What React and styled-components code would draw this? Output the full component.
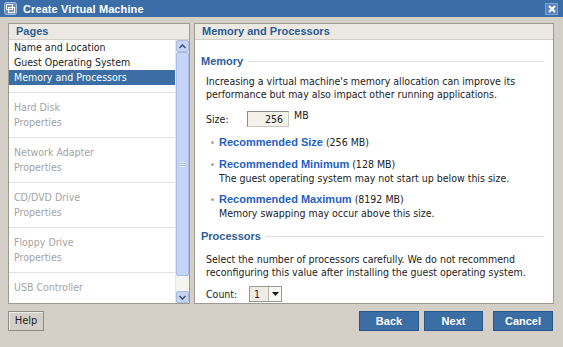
import React from 'react'
import styled, { createGlobalStyle } from 'styled-components'

const regularFont = `"DejaVu Sans Condensed", "Liberation Sans", Arial, sans-serif`
const boldFont = `"Liberation Sans", Arial, sans-serif`

const GlobalStyle = createGlobalStyle`
  html, body {
    margin: 0;
    padding: 0;
  }
  body {
    background: #d4d0c8;
    font-family: ${regularFont};
    font-size: 10.5px;
    color: #222;
  }
`

const pages = [
  { lines: ['Name and Location', 'Guest Operating System', 'Memory and Processors'], enabled: true },
  { lines: ['Hard Disk', 'Properties'] },
  { lines: ['Network Adapter', 'Properties'] },
  { lines: ['CD/DVD Drive', 'Properties'] },
  { lines: ['Floppy Drive', 'Properties'] },
  { lines: ['USB Controller'] },
]

const recommendations = [
  { label: 'Recommended Size', value: '(256 MB)' },
  { label: 'Recommended Minimum', value: '(128 MB)', note: 'The guest operating system may not start up below this size.' },
  { label: 'Recommended Maximum', value: '(8192 MB)', note: 'Memory swapping may occur above this size.' },
]

const VmIcon = () => (
  <svg width="13" height="13" viewBox="0 0 13 13">
    <rect x="0.5" y="0.5" width="12" height="12" rx="2" fill="#6d93c3" stroke="#a9c1e0" />
    <rect x="2.5" y="2.5" width="6" height="5" fill="none" stroke="#fff" />
    <rect x="4.5" y="5.5" width="6" height="5" fill="none" stroke="#fff" />
  </svg>
)

const CloseIcon = () => (
  <svg width="8" height="8" viewBox="0 0 8 8">
    <path d="M1 1 L7 7 M7 1 L1 7" stroke="#fff" strokeWidth="2" />
  </svg>
)

const Chevron = ({ up }) => (
  <svg width="7" height="5" viewBox="0 0 7 5">
    <path d={up ? 'M0.5 4 L3.5 1 L6.5 4' : 'M0.5 1 L3.5 4 L6.5 1'} fill="none" stroke="#3b4f74" strokeWidth="1.5" />
  </svg>
)

const Triangle = () => (
  <svg width="7" height="4" viewBox="0 0 7 4">
    <path d="M0 0 H7 L3.5 4 Z" fill="#111" />
  </svg>
)

export default function App() {
  return (
    <Window>
      <GlobalStyle />
      <TitleBar>
        <VmIcon />
        <Title>Create Virtual Machine</Title>
        <CloseButton>
          <CloseIcon />
        </CloseButton>
      </TitleBar>

      <Main>
        <LeftPanel>
          <PanelHeader>Pages</PanelHeader>
          <ListArea>
            <PageList>
              {pages.map((group, i) => (
                <Group key={i} first={i === 0}>
                  {group.lines.map(line => (
                    <PageItem key={line} enabled={group.enabled} selected={line === 'Memory and Processors'}>
                      {line}
                    </PageItem>
                  ))}
                </Group>
              ))}
            </PageList>
            <Scrollbar>
              <ScrollButton>
                <Chevron up />
              </ScrollButton>
              <Track>
                <Thumb>
                  <Grip />
                </Thumb>
              </Track>
              <ScrollButton>
                <Chevron />
              </ScrollButton>
            </Scrollbar>
          </ListArea>
        </LeftPanel>

        <RightPanel>
          <PanelHeader>Memory and Processors</PanelHeader>
          <Content>
            <SectionTitle>Memory</SectionTitle>
            <Paragraph>
              Increasing a virtual machine's memory allocation can improve its
              <br />
              performance but may also impact other running applications.
            </Paragraph>
            <FieldRow top={10}>
              <FieldLabel width={41}>Size:</FieldLabel>
              <SizeInput>256</SizeInput>
              <Unit>MB</Unit>
            </FieldRow>
            <BulletList>
              {recommendations.map(r => (
                <Bullet key={r.label}>
                  <Dot />
                  <div>
                    <BulletHead>
                      <LinkText>{r.label}</LinkText> {r.value}
                    </BulletHead>
                    {r.note && <BulletNote>{r.note}</BulletNote>}
                  </div>
                </Bullet>
              ))}
            </BulletList>
            <SectionTitle top={9}>Processors</SectionTitle>
            <Paragraph tight>
              Select the number of processors carefully. We do not recommend
              <br />
              reconfiguring this value after installing the guest operating system.
            </Paragraph>
            <FieldRow top={8}>
              <FieldLabel width={43}>Count:</FieldLabel>
              <Select>
                <SelectValue>1</SelectValue>
                <SelectArrow>
                  <Triangle />
                </SelectArrow>
              </Select>
            </FieldRow>
          </Content>
        </RightPanel>
      </Main>

      <Footer>
        <HelpButton>Help</HelpButton>
        <Actions>
          <ActionButton width={60}>Back</ActionButton>
          <ActionButton width={59}>Next</ActionButton>
          <ActionButton width={60} gap={10}>Cancel</ActionButton>
        </Actions>
      </Footer>
    </Window>
  )
}

const Window = styled.div`
  width: 563px;
  height: 347px;
  display: flex;
  flex-direction: column;
  background: #d4d0c8;
  overflow: hidden;
`

const TitleBar = styled.div`
  height: 17px;
  flex-shrink: 0;
  display: flex;
  align-items: center;
  gap: 6px;
  padding: 0 4px;
  background: #3b6ea8;
  color: #fff;
`

const Title = styled.div`
  font-family: ${boldFont};
  font-weight: bold;
  font-size: 11px;
  letter-spacing: 0.1px;
`

const CloseButton = styled.div`
  margin-left: auto;
  margin-right: 1px;
  width: 13px;
  height: 12px;
  display: flex;
  align-items: center;
  justify-content: center;
  background: #5884bb;
  border: 1px solid #7ea0cc;
  box-sizing: border-box;
`

const Main = styled.div`
  flex: 1;
  min-height: 0;
  display: flex;
  gap: 4px;
  padding: 6px 9px 0 8px;
`

const Panel = styled.div`
  display: flex;
  flex-direction: column;
  background: #fff;
  border: 1px solid #9d9a93;
  box-sizing: border-box;
`

const LeftPanel = styled(Panel)`
  width: 182px;
  flex-shrink: 0;
`

const RightPanel = styled(Panel)`
  flex: 1;
`

const PanelHeader = styled.div`
  height: 15px;
  line-height: 15px;
  padding-left: 7px;
  background: #ebe9e2;
  border-bottom: 1px solid #d2cfc7;
  color: #2d5d96;
  font-family: ${boldFont};
  font-size: 11px;
  font-weight: bold;
  flex-shrink: 0;
`

const ListArea = styled.div`
  flex: 1;
  min-height: 0;
  display: flex;
`

const PageList = styled.div`
  flex: 1;
  overflow: hidden;
`

const Group = styled.div`
  padding: ${p => (p.first ? '0 0 7px' : '7px 0')};
  border-top: ${p => (p.first ? 'none' : '1px solid #e2e2e2')};
`

const PageItem = styled.div`
  height: 15px;
  line-height: 15px;
  padding-left: 5px;
  white-space: nowrap;
  color: ${p => (p.selected ? '#fff' : p.enabled ? '#222' : '#a3a3a3')};
  background: ${p => (p.selected ? '#3a6ea5' : 'transparent')};
`

const Scrollbar = styled.div`
  width: 13px;
  display: flex;
  flex-direction: column;
  background: #f4f4f0;
  border-left: 1px solid #e6e6e6;
`

const ScrollButton = styled.div`
  height: 12px;
  display: flex;
  align-items: center;
  justify-content: center;
  background: #c6d4f2;
  border: 1px solid #aabde4;
  border-radius: 2px;
  box-sizing: border-box;
`

const Track = styled.div`
  flex: 1;
  display: flex;
  flex-direction: column;
  padding-bottom: 15px;
`

const Thumb = styled.div`
  flex: 1;
  display: flex;
  align-items: center;
  justify-content: center;
  background: #c3d4f8;
  border: 1px solid #a9bde8;
  border-radius: 2px;
`

const Grip = styled.div`
  width: 5px;
  height: 5px;
  background: repeating-linear-gradient(#e7eefc 0 1px, #a7bbe3 1px 2px);
`

const Content = styled.div`
  padding: 14px 9px 0 6px;
`

const SectionTitle = styled.div`
  display: flex;
  align-items: center;
  gap: 5px;
  height: 14px;
  margin-top: ${p => p.top || 0}px;
  line-height: 14px;
  color: #2d5d96;
  font-family: ${boldFont};
  font-size: 11px;
  font-weight: bold;

  &::after {
    content: '';
    flex: 1;
    border-top: 1px solid #dcdcdc;
  }
`

const Paragraph = styled.div`
  margin: ${p => (p.tight ? '10px' : '7px')} 0 0 5px;
  line-height: ${p => (p.tight ? '12.5px' : '13px')};
  white-space: nowrap;
`

const FieldRow = styled.div`
  display: flex;
  align-items: center;
  margin: ${p => p.top}px 0 0 5px;
`

const FieldLabel = styled.div`
  width: ${p => p.width}px;
`

const SizeInput = styled.div`
  width: 42px;
  height: 16px;
  line-height: 14px;
  box-sizing: border-box;
  text-align: right;
  padding-right: 5px;
  background: #f3f1e9;
  border: 1px solid #8e8c86;
  border-right-color: #c9c7c0;
  border-bottom-color: #c9c7c0;
`

const Unit = styled.div`
  align-self: flex-start;
  margin: -2px 0 0 5px;
`

const BulletList = styled.div`
  display: flex;
  flex-direction: column;
  gap: 7.5px;
  margin: 8px 0 0 5px;
`

const Bullet = styled.div`
  display: flex;
  gap: 5px;
`

const Dot = styled.div`
  width: 3px;
  height: 3px;
  margin: 6px 0 0 5px;
  border-radius: 50%;
  background: #a8a8a8;
  flex-shrink: 0;
`

const BulletHead = styled.div`
  height: 14px;
  line-height: 14px;
  white-space: nowrap;
`

const BulletNote = styled.div`
  height: 14px;
  line-height: 14px;
  white-space: nowrap;
`

const LinkText = styled.span`
  color: #1f5fc0;
  font-family: ${boldFont};
  font-size: 11px;
  font-weight: bold;
`

const Select = styled.div`
  width: 33px;
  height: 16px;
  display: flex;
  box-sizing: border-box;
  border: 1px solid #9a9892;
`

const SelectValue = styled.div`
  flex: 1;
  line-height: 14px;
  padding-left: 4px;
  background: #eeece5;
`

const SelectArrow = styled.div`
  width: 12px;
  display: flex;
  align-items: center;
  justify-content: center;
  background: #f8f7f3;
  border-left: 1px solid #b5b3ad;
`

const Footer = styled.div`
  height: 36px;
  flex-shrink: 0;
  display: flex;
  align-items: flex-start;
  justify-content: space-between;
  padding: 7px 10px 0 8px;
`

const HelpButton = styled.div`
  width: 36px;
  height: 20px;
  line-height: 18px;
  box-sizing: border-box;
  text-align: center;
  background: #d4d0c8;
  border: 1px solid #8f8c85;
  box-shadow: inset 1px 1px #eeece7;
  color: #222;
  font-size: 11px;
`

const Actions = styled.div`
  display: flex;
  gap: 5px;
`

const ActionButton = styled.div`
  width: ${p => p.width}px;
  height: 20px;
  line-height: 18px;
  margin-left: ${p => p.gap - 5 || 0}px;
  box-sizing: border-box;
  text-align: center;
  background: #3a6ea5;
  border: 1px solid #2b5688;
  color: #fff;
  font-family: ${boldFont};
  font-size: 11px;
  font-weight: bold;
`
